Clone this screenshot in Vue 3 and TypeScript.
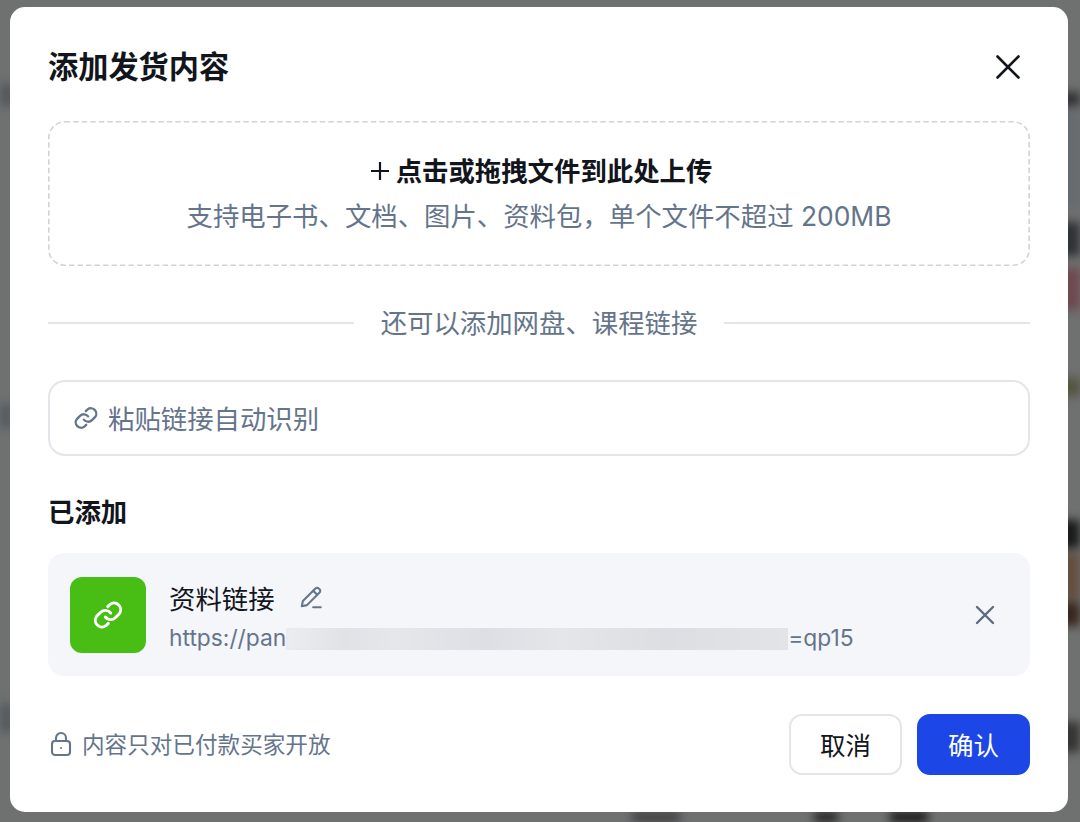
<script setup lang="ts">
const title = '添加发货内容'
const uploadHint = '支持电子书、文档、图片、资料包\uFF0C单个文件不超过 200MB'
</script>

<template>
  <div class="overlay">
    <div class="backdrop">
      <i class="blob l1"></i><i class="blob l2"></i><i class="blob l3"></i>
      <i class="blob r1"></i><i class="blob r1b"></i><i class="blob r2"></i><i class="blob r2b"></i><i class="blob r2c"></i>
      <i class="blob r3"></i><i class="blob r3b"></i><i class="blob r3c"></i><i class="blob r4"></i>
      <i class="blob b1"></i><i class="blob b2"></i><i class="blob b3"></i>
    </div>
    <section class="modal">
      <header class="head">
        <h1>{{ title }}</h1>
        <button class="close" aria-label="关闭">
          <svg viewBox="0 0 24 24" width="24" height="24"><path d="M1.500 1.500 22.500 22.500M22.500 1.500 1.500 22.500" /></svg>
        </button>
      </header>

      <div class="upload">
        <svg class="dash" width="982" height="145"><rect x="0.800" y="0.800" width="980.400" height="143.400" rx="16" /></svg>
        <div class="upload-title">
          <svg viewBox="0 0 20 20" width="20" height="20"><path d="M10 1v18M1 10h18" /></svg>
          <span>点击或拖拽文件到此处上传</span>
        </div>
        <div class="upload-sub">{{ uploadHint }}</div>
      </div>

      <div class="divider"><span>还可以添加网盘、课程链接</span></div>

      <div class="paste">
        <svg viewBox="0 0 24 24" width="26" height="26" class="link-ic">
          <path d="M10 13.500a5 5 0 0 0 7.500.5l3-3a5 5 0 0 0-7-7l-1.700 1.700" />
          <path d="M14 10.500a5 5 0 0 0-7.500-.5l-3 3a5 5 0 0 0 7 7l1.700-1.700" />
        </svg>
        <span>粘贴链接自动识别</span>
      </div>

      <h2>已添加</h2>

      <div class="item">
        <div class="thumb">
          <svg viewBox="0 0 24 24" width="32" height="32">
            <path d="M10 13.500a5 5 0 0 0 7.500.5l3-3a5 5 0 0 0-7-7l-1.700 1.700" />
            <path d="M14 10.500a5 5 0 0 0-7.500-.5l-3 3a5 5 0 0 0 7 7l1.700-1.700" />
          </svg>
        </div>
        <div class="info">
          <div class="name">
            <span>资料链接</span>
            <svg viewBox="0 0 24 24" width="26" height="26" class="pen">
              <path d="M3.500 20.500l1-4.800L16.100 4.100a2.100 2.100 0 0 1 3 0l.8.8a2.100 2.100 0 0 1 0 3L8.300 19.500z" />
              <path d="M14 6.200l3.800 3.800M14 21.500h7" />
            </svg>
          </div>
          <div class="url">
            <span>https://pan</span><span class="mask"><i></i></span><span>=qp15</span>
          </div>
        </div>
        <button class="remove" aria-label="移除">
          <svg viewBox="0 0 20 20" width="20" height="20"><path d="M2 2l16 16M18 2 2 18" /></svg>
        </button>
      </div>

      <footer class="foot">
        <div class="note">
          <svg viewBox="0 0 24 26" width="24" height="26" class="lock">
            <rect x="3" y="10" width="18" height="14" rx="3" />
            <path d="M7 10V7a5 5 0 0 1 10 0v3" />
            <circle cx="12" cy="17" r="1" class="dot" />
          </svg>
          <span>内容只对已付款买家开放</span>
        </div>
        <div class="actions">
          <button class="btn ghost">取消</button>
          <button class="btn primary">确认</button>
        </div>
      </footer>
    </section>
  </div>
</template>

<style>
html, body { margin: 0; background: #6f7070; }
</style>

<style scoped>
* { box-sizing: border-box; }
.overlay {
  position: relative;
  width: 1080px;
  height: 822px;
  padding: 7px 12px 10px 10px;
  overflow: hidden;
  background: #6f7070;
  font-family: Inter, "Noto Sans CJK SC", sans-serif;
}
.backdrop { position: absolute; inset: 0; overflow: hidden; filter: blur(5px); }
.blob { position: absolute; display: block; }
.l1 { left: -10px; top: 84px; width: 24px; height: 22px; background: #53585b; }
.l2 { left: -10px; top: 404px; width: 24px; height: 24px; background: #565b60; }
.l3 { left: -10px; top: 704px; width: 24px; height: 28px; background: #555a5e; }
.r1 { left: 1060px; top: 92px; width: 34px; height: 14px; background: #2f3134; }
.r1b { left: 1060px; top: 112px; width: 34px; height: 96px; background: #656b6f; }
.r2 { left: 1060px; top: 222px; width: 34px; height: 34px; background: #2e3235; }
.r2b { left: 1060px; top: 268px; width: 34px; height: 42px; background: #6d494e; }
.r2c { left: 1060px; top: 378px; width: 34px; height: 18px; background: #54543e; }
.r3 { left: 1060px; top: 520px; width: 34px; height: 28px; background: #18191a; }
.r3b { left: 1060px; top: 553px; width: 34px; height: 46px; background: #634e3e; }
.r3c { left: 1060px; top: 602px; width: 34px; height: 24px; background: #38261c; }
.r4 { left: 1060px; top: 722px; width: 34px; height: 30px; background: #343432; }
.b1 { left: 632px; top: 812px; width: 48px; height: 20px; background: #3f3f41; }
.b2 { left: 814px; top: 812px; width: 24px; height: 20px; background: #222; }
.b3 { left: 890px; top: 812px; width: 38px; height: 20px; background: #141414; }

.modal {
  position: relative;
  width: 1058px;
  height: 805px;
  padding: 0 38px;
  background: #fff;
  border-radius: 15px;
}
.head { height: 114px; display: flex; align-items: center; justify-content: space-between; padding-top: 6px; }
h1 { margin: 0; font-size: 30.200px; font-weight: 600; line-height: 40px; color: #12151c; }
.close { display: flex; border: 0; padding: 0; margin-right: 10px; background: none; }
.close path { fill: none; stroke: #12151c; stroke-width: 2.600; stroke-linecap: round; }

.upload {
  position: relative;
  height: 145px;
  display: flex;
  flex-direction: column;
  align-items: center;
  justify-content: center;
  gap: 7px;
}
.dash { position: absolute; inset: 0; }
.dash rect { fill: none; stroke: #d1d3d8; stroke-width: 1.600; stroke-dasharray: 5.500 3; }
.upload-title { display: flex; align-items: center; gap: 6px; padding-left: 4px; font-size: 26.400px; line-height: 38px; font-weight: 600; color: #12151c; }
.upload-title path { fill: none; stroke: #12151c; stroke-width: 2.200; }
.upload-sub { font-size: 26.400px; line-height: 38px; color: #64748b; }

.divider { display: flex; align-items: center; gap: 27px; height: 40px; margin-top: 37px; font-size: 26.400px; color: #64748b; }
.divider span { position: relative; top: -2px; }
.divider::before, .divider::after { content: ""; flex: 1; height: 2px; background: #e3e5ea; }

.paste {
  display: flex;
  align-items: center;
  gap: 9px;
  height: 76px;
  margin-top: 37px;
  padding: 0 23px;
  border: 2px solid #e3e5ea;
  border-radius: 17px;
  font-size: 26.400px;
  color: #64748b;
}
.paste span { margin-top: -2px; }
.link-ic path { fill: none; stroke: #64748b; stroke-width: 2.100; stroke-linecap: round; }

h2 { margin: 37px 0 0; font-size: 26.400px; line-height: 38px; font-weight: 600; color: #12151c; }

.item {
  display: flex;
  align-items: center;
  height: 123px;
  margin-top: 22px;
  padding: 0 35px 0 22px;
  background: #f4f6fa;
  border-radius: 16px;
}
.thumb { width: 76px; height: 76px; flex: none; display: flex; align-items: center; justify-content: center; background: #48bd14; border-radius: 12px; }
.thumb path { fill: none; stroke: #fff; stroke-width: 2.200; stroke-linecap: round; }
.info { flex: 1; margin-left: 23px; min-width: 0; padding-top: 3px; }
.name { display: flex; align-items: center; gap: 23px; height: 38px; font-size: 26.400px; color: #12151c; }
.url { display: flex; align-items: center; height: 34px; margin-top: 4px; font-size: 22.800px; color: #64748b; }
.mask { position: relative; width: 502px; height: 22px; margin-top: 4px; overflow: hidden; background: #e0e2e7; }
.mask i { position: absolute; inset: -3px; display: block; filter: blur(3px); background: linear-gradient(90deg, #eceef2 0%, #e0e2e7 12%, #e5e7eb 22%, #dcdfe4 40%, #e4e6ea 55%, #dcdee3 75%, #e2e4e8 100%); }
.pen path { fill: none; stroke: #64748b; stroke-width: 1.900; stroke-linecap: round; stroke-linejoin: round; }
.remove { display: flex; border: 0; padding: 0; background: none; }
.remove path { fill: none; stroke: #5b6b80; stroke-width: 2.400; stroke-linecap: round; }

.foot { display: flex; align-items: center; justify-content: space-between; margin-top: 38px; }
.note { display: flex; align-items: center; gap: 9px; margin-left: 1px; font-size: 22.600px; color: #64748b; }
.note span { margin-top: -3px; }
.lock { margin-top: -1px; }
.lock rect, .lock path { fill: none; stroke: #64748b; stroke-width: 2.100; }
.lock .dot { fill: #64748b; }
.actions { display: flex; gap: 15px; }
.btn { width: 113px; height: 61px; border-radius: 13px; font-family: inherit; font-size: 25.500px; padding: 0 0 3px; }
.ghost { background: #fff; border: 2px solid #e3e5ea; color: #12151c; }
.primary { background: #1c47e6; border: 0; color: #fff; }
</style>
